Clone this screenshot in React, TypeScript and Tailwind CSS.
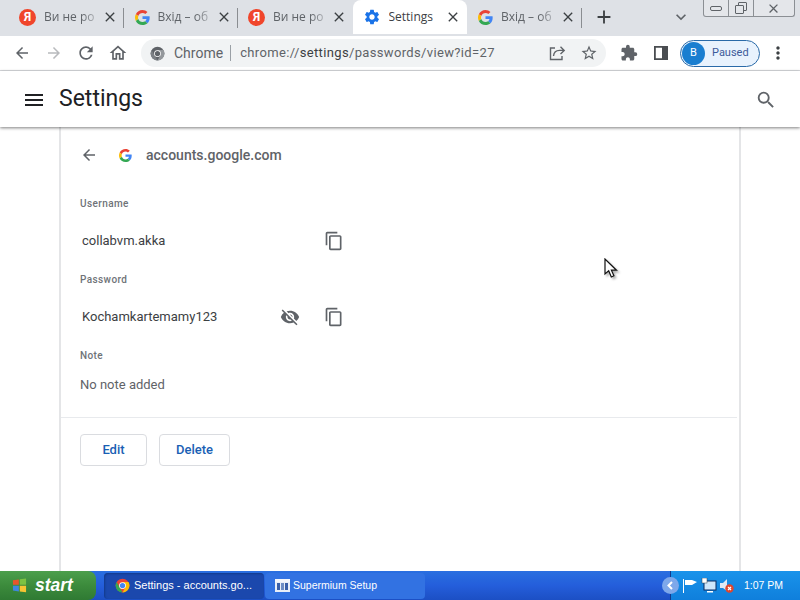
import React from 'react';
import {
  MdArrowBack, MdArrowForward, MdRefresh, MdOutlineHome, MdStarBorder, MdExtension, MdMoreVert,
  MdMenu, MdSearch, MdContentCopy, MdVisibilityOff, MdClose, MdAdd, MdExpandMore, MdSettings,
} from 'react-icons/md';

const GoogleLogo = ({ size = 15 }: { size?: number }) => (
  <svg width={size} height={size} viewBox="0 0 48 48" className="shrink-0">
    <path fill="#EA4335" d="M24 9.5c3.5 0 6.7 1.2 9.1 3.6l6.8-6.8C35.8 2.4 30.3 0 24 0 14.6 0 6.5 5.4 2.6 13.2l7.9 6.2C12.4 13.6 17.7 9.5 24 9.5z" />
    <path fill="#4285F4" d="M46.9 24.5c0-1.6-.1-3.1-.4-4.5H24v9h12.9c-.6 3-2.2 5.5-4.8 7.2l7.7 6c4.5-4.2 7.1-10.3 7.1-17.7z" />
    <path fill="#FBBC05" d="M10.5 28.6c-.5-1.4-.8-3-.8-4.6s.3-3.2.8-4.6l-7.9-6.2C.9 16.5 0 20.1 0 24s.9 7.5 2.6 10.8l7.9-6.2z" />
    <path fill="#34A853" d="M24 48c6.5 0 11.9-2.1 15.9-5.8l-7.7-6c-2.1 1.4-4.9 2.3-8.1 2.3-6.3 0-11.6-4.1-13.5-9.9l-7.9 6.2C6.5 42.6 14.6 48 24 48z" />
  </svg>
);

const YandexIcon = () => (
  <span className="-ml-[1px] flex h-[17px] w-[17px] shrink-0 items-center justify-center rounded-full bg-[#f0452b] text-[12px] font-bold leading-none text-white">
    Я
  </span>
);

const ChromeLogo = ({ size = 16, grey = false }: { size?: number; grey?: boolean }) => (
  <svg width={size} height={size} viewBox="0 0 24 24" className="shrink-0">
    <circle cx="12" cy="12" r="11" fill={grey ? '#5f6368' : '#ea4335'} />
    <path fill={grey ? '#7b7f84' : '#34a853'} d="M12 23A11 11 0 0 1 2.5 6.5L8 16l4 7z" />
    <path fill={grey ? '#94989c' : '#fbbc05'} d="M12 23a11 11 0 0 0 9.6-16.5H12l4 9.5-4 7z" />
    <circle cx="12" cy="12" r="5.4" fill="#fff" />
    <circle cx="12" cy="12" r="4.2" fill={grey ? '#5f6368' : '#4285f4'} />
  </svg>
);

const ShareIcon = () => (
  <svg width="18" height="18" viewBox="0 0 18 18" fill="none" stroke="#5f6368" strokeWidth="1.4">
    <path d="M7 4H2.500v11.500H14V12" />
    <path d="M5.500 12c.4-3.600 3-5.600 6-5.600H16M12.500 2.800 16.200 6.400 12.500 10" />
  </svg>
);

const SidePanelIcon = () => (
  <svg width="16" height="16" viewBox="0 0 16 16">
    <path fill="#4a4d51" fillRule="evenodd" d="M1 1h14v14H1zM2.800 2.800v10.400H9V2.800z" />
  </svg>
);

const tabs = [
  { title: 'Ви не ро', icon: <YandexIcon /> },
  { title: 'Вхід – об', icon: <GoogleLogo /> },
  { title: 'Ви не ро', icon: <YandexIcon /> },
  { title: 'Settings', icon: <MdSettings size={18} className="-ml-[1px] shrink-0 text-[#1a73e8]" />, active: true },
  { title: 'Вхід – об', icon: <GoogleLogo /> },
];

const Tab = ({ title, icon, active, divider }: { title: string; icon: React.ReactNode; active?: boolean; divider?: boolean }) => (
  <div className={`relative flex h-[34px] w-[114.500px] items-center pl-[11px] pr-[6px] ${active ? 'rounded-t-lg bg-white' : ''}`}>
    {icon}
    <span className={`ml-[8px] w-[40px] flex-1 overflow-hidden whitespace-nowrap text-[12px] font-['Open_Sans',sans-serif] ${active ? 'text-[#3c4043]' : 'text-[#5f6368] [mask-image:linear-gradient(90deg,#000_65%,transparent)]'}`}>
      {title}
    </span>
    <MdClose size={16} className="shrink-0 text-[#3c4043]" />
    {divider && <span className="absolute right-0 top-[8px] h-[20px] w-px bg-[#8a8d91]" />}
  </div>
);

const fieldLabel = 'h-[17px] text-[10px] font-medium leading-[17px] tracking-[0.4px] text-[#6f7378]';

const Field = ({ label, value, canReveal }: { label: string; value: string; canReveal?: boolean }) => (
  <div className="flex h-[76px] flex-col">
    <div className={fieldLabel}>{label}</div>
    <div className="mt-[13px] flex h-[32px] items-center pl-[2px]">
      <span className="w-[199px] text-[13px] text-[#3c4043]">{value}</span>
      <span className="-ml-[1px] flex w-[20px] justify-center">
        {canReveal && <MdVisibilityOff size={20} className="text-[#5f6368]" />}
      </span>
      <MdContentCopy size={20} className="ml-[24px] text-[#5f6368]" />
    </div>
  </div>
);

const TaskButton = ({ children, active }: { children: React.ReactNode; active?: boolean }) => (
  <div className={`flex h-[26px] w-[160px] items-center gap-[3px] pl-[10px] text-[11px] text-white font-['Liberation_Sans',sans-serif] ${active ? 'rounded-sm bg-[#1b48ad] shadow-[inset_1px_1px_2px_#123a8c]' : 'rounded-sm bg-[#3272e2]'}`}>
    {children}
  </div>
);

export default function App() {
  return (
    <div className="relative flex h-[600px] w-[800px] flex-col overflow-hidden bg-white font-['Roboto',sans-serif]">
      {/* tab strip */}
      <div className="flex h-[36px] shrink-0 items-start bg-[#dee1e6] pl-[9px]">
        {tabs.map((tab, i) => (
          <Tab key={i} {...tab} divider={i < 2 || i === 4} />
        ))}
        <MdAdd size={22} className="ml-[11px] mt-[6px] text-[#3c4043]" />
        <MdExpandMore size={20} className="ml-[56px] mt-[7px] text-[#5f6368]" />
        <div className="ml-[12px] flex h-[17px] w-[92px] items-center rounded-b-[3px] border border-t-0 border-[#8b8f94] bg-[#e4e6ea]">
          <span className="flex h-full w-[25px] items-center justify-center border-r border-[#8b8f94]">
            <span className="h-[5px] w-[12px] rounded-[2px] border border-[#5f6368]" />
          </span>
          <span className="relative flex h-full w-[25px] items-center justify-center border-r border-[#8b8f94]">
            <span className="absolute left-[9px] top-[2px] h-[9px] w-[9px] rounded-[1px] border border-[#5f6368]" />
            <span className="absolute left-[6px] top-[5px] h-[9px] w-[9px] rounded-[1px] border border-[#5f6368] bg-[#e4e6ea]" />
          </span>
          <span className="flex flex-1 items-center justify-center">
            <MdClose size={15} className="text-[#5f6368]" />
          </span>
        </div>
      </div>

      {/* toolbar */}
      <div className="flex h-[35px] shrink-0 items-center border-b border-[#dadce0] bg-white pl-[13px]">
        <MdArrowBack size={18} className="text-[#5f6368]" />
        <MdArrowForward size={18} className="ml-[14px] text-[#b8babd]" />
        <MdRefresh size={20} className="ml-[13px] text-[#5f6368]" />
        <MdOutlineHome size={20} className="ml-[12px] text-[#5f6368]" />
        <div className="ml-[13px] flex h-[28px] w-[465px] items-center rounded-full bg-[#f1f3f4] pl-[9px]">
          <ChromeLogo size={15} grey />
          <span className="ml-[9px] text-[14px] text-[#5f6368]">Chrome</span>
          <span className="ml-[7px] h-[16px] w-px bg-[#9aa0a6]" />
          <span className="ml-[9px] text-[13px] tracking-[0.35px] text-[#5f6368]">
            chrome://<span className="text-[#3c4043]">settings</span>/passwords/view?id=27
          </span>
          <span className="ml-auto flex items-center gap-[14px] pr-[8px]">
            <ShareIcon />
            <MdStarBorder size={18} className="text-[#5f6368]" />
          </span>
        </div>
        <MdExtension size={18} className="ml-[14px] text-[#5f6368]" />
        <span className="ml-[15px]"><SidePanelIcon /></span>
        <div className="ml-[11px] flex h-[27px] w-[80px] items-center rounded-full border border-[#2a6aa8] bg-[#e8f2fd] pl-[1px]">
          <span className="flex h-[23px] w-[23px] items-center justify-center rounded-full bg-[#1a7ed0] text-[11px] text-white">B</span>
          <span className="ml-[7px] text-[11px] text-[#3c5a9a]">Paused</span>
        </div>
        <MdMoreVert size={20} className="ml-[8px] text-[#3c4043]" />
      </div>

      {/* settings header */}
      <div className="relative z-10 flex h-[56px] shrink-0 items-center bg-white pl-[22px] pt-[1px] shadow-[0_1px_3px_rgba(0,0,0,0.5)]">
        <MdMenu size={24} className="text-[#202124]" />
        <span className="ml-[13px] text-[23px] text-[#202124]">Settings</span>
        <MdSearch size={22} className="ml-auto mr-[23px] text-[#5f6368]" />
      </div>

      {/* password details card */}
      <div className="min-h-0 flex-1 pl-[59px]">
        <div className="h-full w-[682px] border-x-2 border-[#e4e5e7] bg-white">
          <div className="flex h-[56px] items-center pl-[19px]">
            <MdArrowBack size={18} className="text-[#5f6368]" />
            <span className="ml-[21px]"><GoogleLogo size={13} /></span>
            <span className="ml-[14px] text-[14px] font-medium text-[#5f6368]">accounts.google.com</span>
          </div>
          <div className="pl-[19px] pt-[12px]">
            <Field label="Username" value="collabvm.akka" />
            <Field label="Password" value="Kochamkartemamy123" canReveal />
            <div className={fieldLabel}>Note</div>
            <div className="mt-[11px] text-[13px] text-[#5f6368]">No note added</div>
          </div>
          <div className="mt-[22px] h-px w-[676px] bg-[#e8eaed]" />
          <div className="flex gap-[12px] pl-[19px] pt-[16px]">
            <button className="h-[32px] w-[67px] rounded border border-[#dadce0] bg-white text-[13px] font-medium text-[#1a5fb4]">Edit</button>
            <button className="h-[32px] w-[71px] rounded border border-[#dadce0] bg-white text-[13px] font-medium text-[#1a5fb4]">Delete</button>
          </div>
        </div>
      </div>

      {/* XP taskbar */}
      <div className="flex h-[29px] shrink-0 items-center bg-gradient-to-b from-[#2a6fe0] via-[#245edb] to-[#1c4fc4]">
        <div className="flex h-full w-[96px] items-center rounded-r-lg bg-gradient-to-b from-[#4c9f4c] via-[#3c8b3c] to-[#2f7a33] pl-[12px]">
          <svg width="15" height="15" viewBox="0 0 16 16">
            <path fill="#e8552c" d="M1 2.500 7.300 1.500V7.300H1z" />
            <path fill="#7cc242" d="M8.300 1.300 15 .5v6.800H8.300z" />
            <path fill="#3f87e0" d="M1 8.300h6.300v6L1 13.300z" />
            <path fill="#f7c433" d="M8.300 8.300H15v7l-6.700-1z" />
          </svg>
          <span className="ml-[8px] text-[17.500px] font-bold italic text-white font-['Liberation_Sans',sans-serif]">start</span>
        </div>
        <div className="ml-[8px] flex gap-[1px]">
          <TaskButton active>
            <span className="ml-[1px]"><ChromeLogo size={15} /></span>
            <span className="ml-[1px] whitespace-nowrap">Settings - accounts.go...</span>
          </TaskButton>
          <TaskButton>
            <svg width="15" height="13" viewBox="0 0 15 13" className="mr-[0px]">
              <rect width="15" height="13" fill="#e8eef8" />
              <rect y="0" width="15" height="3" fill="#f4f6fb" />
              <rect x="2" y="4" width="3" height="7" fill="#3a5fa8" />
              <rect x="6" y="4" width="3" height="7" fill="#6d8cc4" />
              <rect x="10" y="4" width="3" height="7" fill="#3a5fa8" />
            </svg>
            <span className="whitespace-nowrap text-[10.500px]">Supermium Setup</span>
          </TaskButton>
        </div>
        <div className="ml-auto flex h-full w-[130px] items-center border-l border-[#123a8c] bg-gradient-to-b from-[#1a93ea] to-[#0f7fdc]">
          <span className="-ml-[9px] flex h-[17px] w-[17px] items-center justify-center rounded-full bg-[#7ea8ea]">
            <svg width="9" height="9" viewBox="0 0 9 9" fill="none" stroke="#fff" strokeWidth="2"><path d="M6 1 2.500 4.500 6 8" /></svg>
          </span>
          <svg width="16" height="14" viewBox="0 0 16 14" className="ml-[3px]"><path fill="#fff" d="M1 0h1v14H1zM3 1h7l5 2-5 3H3z" /></svg>
          <svg width="16" height="15" viewBox="0 0 16 15" className="ml-[3px]">
            <rect x="3" y="3" width="12" height="9" fill="#cfe6fb" stroke="#0b2a60" />
            <rect x="1" y="0" width="5" height="5" fill="#fff" stroke="#345" strokeWidth=".5" />
            <rect x="6" y="13" width="6" height="1.500" fill="#fff" />
          </svg>
          <svg width="15" height="15" viewBox="0 0 15 15" className="ml-[2px]">
            <path fill="#dfe8f4" d="M1 5h3l4-4v12L4 10H1z" />
            <circle cx="10.500" cy="10.500" r="4.200" fill="#e0452c" />
            <path stroke="#fff" strokeWidth="1.200" d="M9 9l3 3M12 9l-3 3" />
          </svg>
          <span className="ml-[10px] text-[10.500px] text-white font-['Liberation_Sans',sans-serif]">1:07 PM</span>
        </div>
      </div>

      {/* mouse pointer */}
      <svg width="16" height="22" viewBox="0 0 16 22" className="absolute left-[604px] top-[258px] drop-shadow-[2px_2px_1px_rgba(0,0,0,0.3)]">
        <path fill="#fff" stroke="#111" strokeWidth="1.200" d="M1 1v15l3.700-3.300L7.300 19l2.600-1.200-2.500-5.600H12.500z" />
      </svg>
    </div>
  );
}
